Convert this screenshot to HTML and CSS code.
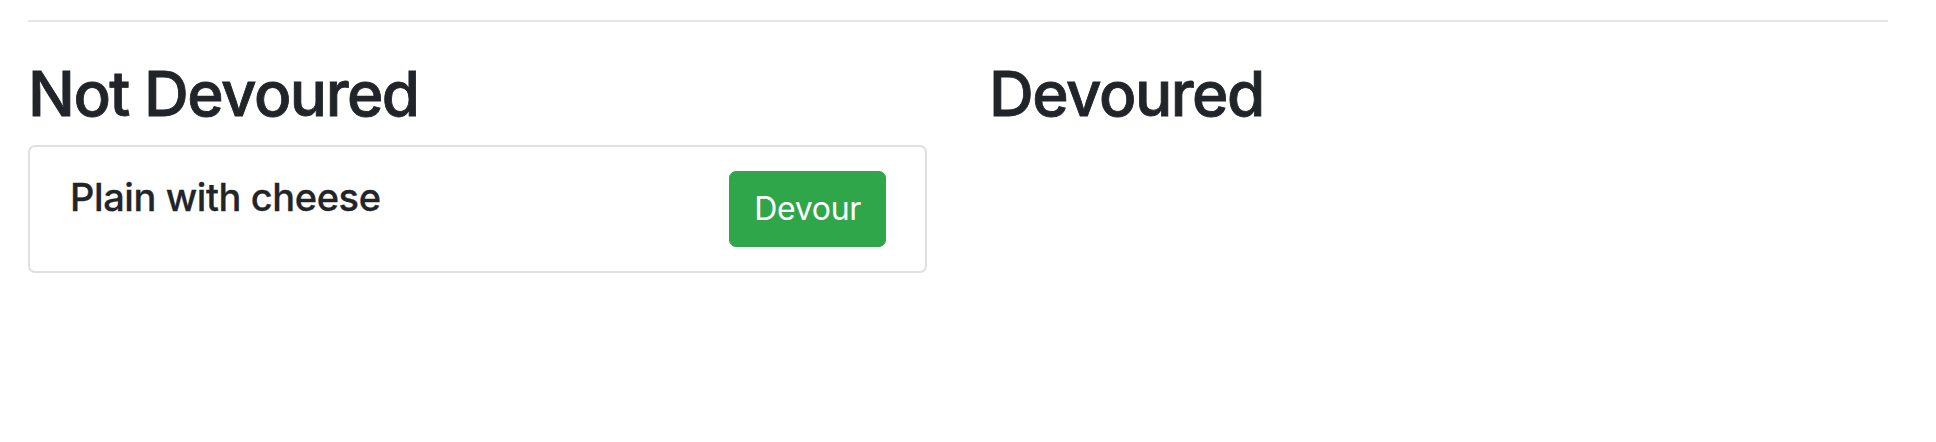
FILE: index.html
```html
<!DOCTYPE html>
<html lang="en">
<head>
<meta charset="utf-8">
<title>Burgers</title>
<link rel="stylesheet" href="styles.css">
</head>
<body>
<div class="page">
  <hr class="rule">
  <div class="columns">
    <section class="col">
      <h1 class="heading">Not Devoured</h1>
      <div class="card">
        <h5 class="item-name">Plain with cheese</h5>
        <button class="btn-devour" type="button">Devour</button>
      </div>
    </section>
    <section class="col">
      <h1 class="heading">Devoured</h1>
    </section>
  </div>
</div>
</body>
</html>
```

FILE: styles.css
```css
* { box-sizing: border-box; }
html, body { margin: 0; padding: 0; background: #fff; }
body {
  font-family: Inter, "Liberation Sans", Arial, sans-serif;
  color: #212529;
}
.page {
  padding: 20px 48px 0 28px;
}
.rule {
  margin: 0;
  border: 0;
  border-top: 2px solid #e5e5e5;
  height: 0;
}
.columns {
  display: grid;
  grid-template-columns: 1fr 1fr;
  column-gap: 62px;
}
.heading {
  margin: 35px 0 14px;
  font-size: 62px;
  font-weight: 500;
  letter-spacing: -1.5px;
  line-height: 1.2;
  -webkit-text-stroke: 0.8px #212529;
}
.card {
  display: flex;
  justify-content: space-between;
  align-items: flex-start;
  border: 2px solid #e0e0e0;
  border-radius: 7px;
  padding: 24px 39px 24px 40px;
}
.item-name {
  margin: 0;
  font-size: 38px;
  font-weight: 500;
  letter-spacing: -0.4px;
  line-height: 52px;
  -webkit-text-stroke: 0.3px #212529;
}
.btn-devour {
  font-family: inherit;
  font-size: 32px;
  font-weight: 400;
  letter-spacing: -0.3px;
  line-height: 48px;
  color: #fff;
  background: #30a64b;
  border: 1px solid #30a64b;
  border-radius: 7px;
  padding: 13px 24px;
}
```
